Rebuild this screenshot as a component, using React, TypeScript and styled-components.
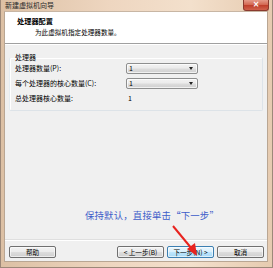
import styled, { createGlobalStyle } from "styled-components";

const GlobalStyle = createGlobalStyle`
  html, body {
    margin: 0;
    padding: 0;
    width: 273px;
    height: 268px;
    overflow: hidden;
    background: #ffffff;
  }
  body {
    font-family: "Noto Sans CJK SC", "Noto Sans", sans-serif;
  }
`;

const Window = styled.div`
  position: relative;
  width: 273px;
  height: 268px;
  box-sizing: border-box;
  display: flex;
  flex-direction: column;
  padding: 0 4px 5px 3px;
  background: linear-gradient(90deg, #dcc0a4 0%, #eed6c0 40%, #f3e0cc 70%, #e6cbb0 100%);
  border: 1px solid #9c8878;
  border-top: none;
`;

const TitleBar = styled.div`
  height: 11px;
  display: flex;
  align-items: center;
  justify-content: space-between;
  margin-right: -4px;
`;

const TitleText = styled.span`
  font-size: 7px;
  line-height: 11px;
  color: #2a2a2a;
  padding-left: 1px;
`;

const CloseButton = styled.div`
  width: 24px;
  height: 10px;
  margin-top: -1px;
  margin-right: 3px;
  border: 1px solid #8a3a2e;
  border-top: none;
  border-radius: 0 0 3px 3px;
  background: linear-gradient(180deg, #e49a88 0%, #d46a55 45%, #c0402c 55%, #d0624c 100%);
  display: flex;
  align-items: center;
  justify-content: center;
  color: #ffffff;
  font-size: 8px;
  font-weight: bold;
  line-height: 1;
  font-family: "DejaVu Sans", sans-serif;
`;

const Client = styled.div`
  flex: 1;
  display: flex;
  flex-direction: column;
  background: #f0f0f0;
  border: 1px solid #b9a693;
  border-top-color: #c8b6a4;
`;

const Header = styled.div`
  height: 32px;
  background: #ffffff;
  border-bottom: 1px solid #a0a0a0;
  box-shadow: 0 1px 0 #ffffff;
  box-sizing: border-box;
  padding: 4px 0 0 12px;
  display: flex;
  flex-direction: column;
`;

const HeaderTitle = styled.div`
  font-size: 7.2px;
  font-weight: bold;
  line-height: 11px;
  color: #000000;
`;

const HeaderSub = styled.div`
  font-size: 6.6px;
  line-height: 11px;
  color: #000000;
  padding-left: 18px;
`;

const Body = styled.div`
  flex: 1;
  position: relative;
  display: flex;
  flex-direction: column;
  padding: 8px 4px 0 4px;
`;

const GroupBox = styled.fieldset`
  margin: 0;
  padding: 1px 0 6px 5px;
  border: 1px solid #dde3e8;
  border-radius: 2px;
  box-shadow: inset 1px 1px 0 #ffffff;
  border-top-color: transparent;
  border-left-color: #e4ebf0;
`;

const Legend = styled.legend`
  padding: 0;
  margin-left: 0;
  font-size: 7px;
  line-height: 10px;
  color: #000000;
`;

const Grid = styled.div`
  display: grid;
  grid-template-columns: 111px 72px;
  row-gap: 4px;
  align-items: center;
`;

const Label = styled.span`
  font-size: 7px;
  line-height: 11px;
  color: #000000;
  white-space: nowrap;
`;

const Value = styled.span`
  font-size: 7px;
  line-height: 11px;
  padding-left: 2px;
  color: #000000;
`;

const Combo = styled.div`
  height: 11px;
  box-sizing: border-box;
  border: 1px solid #8e8f8f;
  border-radius: 2px;
  background: linear-gradient(180deg, #f2f2f2 0%, #ebebeb 48%, #dddddd 52%, #cfcfcf 100%);
  box-shadow: inset 0 0 0 1px rgba(255, 255, 255, 0.7);
  display: flex;
  align-items: center;
  justify-content: space-between;
  padding: 0 4px 0 2px;
  font-size: 7px;
  line-height: 9px;
  color: #000000;
`;

const Arrow = styled.span`
  width: 0;
  height: 0;
  border-left: 2px solid transparent;
  border-right: 2px solid transparent;
  border-top: 3px solid #222222;
`;

const Hint = styled.div`
  margin-top: auto;
  margin-bottom: 18px;
  text-align: center;
  padding-left: 32px;
  font-size: 9.4px;
  line-height: 12px;
  color: #3d5cc9;
  letter-spacing: 0.2px;
`;

const Footer = styled.div`
  height: 22px;
  box-sizing: border-box;
  border-top: 1px solid #dfdfdf;
  box-shadow: inset 0 1px 0 #ffffff;
  display: flex;
  align-items: center;
  padding: 3px 3px 0 4px;
  gap: 3px;
`;

const Spacer = styled.div`
  flex: 1;
`;

const Button = styled.div<{ $primary?: boolean }>`
  width: 47px;
  height: 12px;
  box-sizing: border-box;
  border: 1px solid ${(p) => (p.$primary ? "#3c7fb1" : "#707070")};
  border-radius: 2px;
  background: ${(p) =>
    p.$primary
      ? "linear-gradient(180deg, #eaf6fd 0%, #d9f0fc 48%, #bee6fd 52%, #a7d9f5 100%)"
      : "linear-gradient(180deg, #f2f2f2 0%, #ebebeb 48%, #dddddd 52%, #cfcfcf 100%)"};
  box-shadow: inset 0 0 0 1px rgba(255, 255, 255, 0.6);
  display: flex;
  align-items: center;
  justify-content: center;
  font-size: 6.6px;
  line-height: 10px;
  color: #000000;
  white-space: nowrap;
`;

const Pointer = styled.svg`
  position: absolute;
  left: 0;
  top: 0;
  pointer-events: none;
`;

export default function App() {
  return (
    <>
      <GlobalStyle />
      <Window>
        <TitleBar>
          <TitleText>新建虚拟机向导</TitleText>
          <CloseButton>×</CloseButton>
        </TitleBar>
        <Client>
          <Header>
            <HeaderTitle>处理器配置</HeaderTitle>
            <HeaderSub>为此虚拟机指定处理器数量。</HeaderSub>
          </Header>
          <Body>
            <GroupBox>
              <Legend>处理器</Legend>
              <Grid>
                <Label>处理器数量(P):</Label>
                <Combo>
                  1<Arrow />
                </Combo>
                <Label>每个处理器的核心数量(C):</Label>
                <Combo>
                  1<Arrow />
                </Combo>
                <Label>总处理器核心数量:</Label>
                <Value>1</Value>
              </Grid>
            </GroupBox>
            <Hint>保持默认，直接单击“下一步”</Hint>
          </Body>
          <Footer>
            <Button>帮助</Button>
            <Spacer />
            <Button>&lt; 上一步(B)</Button>
            <Button $primary>下一步(N) &gt;</Button>
            <Button>取消</Button>
          </Footer>
        </Client>
        <Pointer width="273" height="268" viewBox="0 0 273 268">
          <line x1="172" y1="226" x2="191" y2="249" stroke="#e8231f" strokeWidth="2" />
          <polygon points="196,256 186,249 194,243" fill="#e8231f" />
        </Pointer>
      </Window>
    </>
  );
}
